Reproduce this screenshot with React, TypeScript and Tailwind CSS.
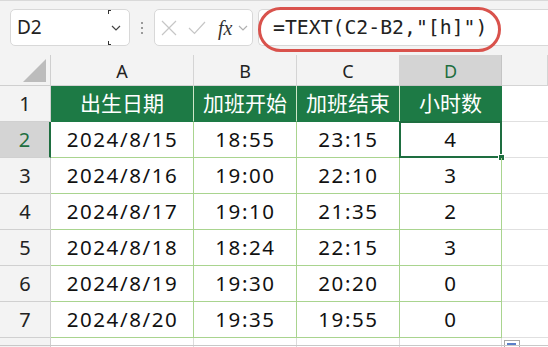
import React from "react";

const font = { fontFamily: '"Noto Sans", "Noto Sans CJK SC", sans-serif' };

const rows = [
  ["2024/8/15", "18:55", "23:15", "4"],
  ["2024/8/16", "19:00", "22:10", "3"],
  ["2024/8/17", "19:10", "21:35", "2"],
  ["2024/8/18", "18:24", "22:15", "3"],
  ["2024/8/19", "19:30", "20:20", "0"],
  ["2024/8/20", "19:35", "19:55", "0"],
];

const heads = ["出生日期", "加班开始", "加班结束", "小时数"];

function Chevron({ color }: { color: string }) {
  return (
    <svg width="10" height="6" viewBox="0 0 10 6">
      <path d="M1 1 L5 5 L9 1" fill="none" stroke={color} strokeWidth="1.2" />
    </svg>
  );
}

export default function App() {
  return (
    <div className="w-[548px] h-[347px] overflow-hidden bg-white relative" style={font}>
      {/* toolbar */}
      <div className="h-[55px] bg-[#f3f3f3] border-t border-[#d9d9d9] flex items-start pt-[8px] pl-[10px]">
        <div className="w-[120px] h-[37px] bg-white border border-[#d8d8d8] rounded-[5px] flex items-center pl-[6px] pr-[8px] relative">
          <span className="text-[19px] text-[#222] leading-none">D2</span>
          <div className="flex-1" />
          <Chevron color="#444" />
          <div className="absolute left-[97px] top-[0px] w-[3px] h-[4px] border-l border-t border-[#333]" />
          <div className="absolute left-[97px] bottom-[0px] w-[3px] h-[4px] border-l border-b border-[#333]" />
        </div>
        <div className="w-[24px] h-[37px] flex flex-col items-center justify-center gap-[3px]">
          <div className="w-[2px] h-[2px] bg-[#9a9a9a]" />
          <div className="w-[2px] h-[2px] bg-[#9a9a9a]" />
          <div className="w-[2px] h-[2px] bg-[#9a9a9a]" />
        </div>
        <div className="w-[99px] h-[37px] bg-white border border-[#d8d8d8] rounded-[5px] flex items-center pl-[6px]">
          <svg width="16" height="16" viewBox="0 0 16 16">
            <path d="M1 1 L15 15 M15 1 L1 15" stroke="#c6c6c6" strokeWidth="1.2" />
          </svg>
          <div className="w-[11px]" />
          <svg width="18" height="14" viewBox="0 0 18 14">
            <path d="M1 7 L6.5 12.5 L17 1" fill="none" stroke="#c6c6c6" strokeWidth="1.2" />
          </svg>
          <div className="w-[12px]" />
          <span
            className="text-[20px] italic text-[#333] leading-none"
            style={{ fontFamily: '"Liberation Serif", serif' }}
          >
            fx
          </span>
          <div className="w-[6px]" />
          <Chevron color="#b0b0b0" />
        </div>
        <div className="ml-[5px] flex-1 h-[37px] bg-white border-y border-l border-[#d8d8d8] rounded-l-[5px] flex items-center pl-[14px]">
          <span
            className="text-[19.8px] text-[#222] leading-none whitespace-pre"
            style={{ fontFamily: '"DejaVu Sans Mono", monospace' }}
          >
            =TEXT(C2-B2,"[h]")
          </span>
        </div>
      </div>

      {/* red highlight */}
      <div className="absolute left-[258px] top-[7px] w-[243px] h-[45px] border-[3px] border-[#d9524c] rounded-full" />

      {/* sheet */}
      <div className="grid grid-cols-[51px_143px_103px_103px_102px_1fr] [grid-template-rows:31px_repeat(7,36px)_36px]">
        {/* header row */}
        <div className="bg-[#f3f3f3] border-r border-b border-[#cfcfcf] flex items-end justify-end pr-[3px] pb-[2px]">
          <svg width="24" height="24" viewBox="0 0 24 24">
            <polygon points="23,0 23,23 0,23" fill="#bcbcbc" />
          </svg>
        </div>
        {["A", "B", "C"].map((c) => (
          <div
            key={c}
            className="bg-[#f3f3f3] border-r border-b border-[#d4d4d4] flex items-center justify-center text-[18px] text-[#222] pt-[3px]"
          >
            {c}
          </div>
        ))}
        <div className="bg-[#d4d4d4] border-r border-b border-[#c4c4c4] flex items-center justify-center text-[18px] text-[#1e6e40] pt-[3px]">
          D
        </div>
        <div className="bg-[#f3f3f3] border-r border-b border-[#d4d4d4]" />

        {/* row 1 */}
        <div className="bg-[#f3f3f3] border-r border-b border-[#d0d0d0] flex items-center justify-center text-[20px] text-[#222]">
          1
        </div>
        {heads.map((h, i) => (
          <div
            key={h}
            className={`bg-[#1d7a45] border-b border-[#1d7a45] flex items-center justify-center text-[21px] text-white ${
              i < 3 ? "border-r border-r-[#cfe6c8]" : "border-r border-r-[#1d7a45]"
            }`}
          >
            {h}
          </div>
        ))}
        <div className="border-b border-[#e0e0e0]" />

        {rows.map((r, ri) => {
          const sel = ri === 0;
          return (
            <React.Fragment key={ri}>
              <div
                className={`${
                  sel ? "bg-[#d4d4d4] text-[#1e6e40] border-r-2 border-r-[#1e6e40]" : "bg-[#f3f3f3] text-[#222] border-r border-r-[#cfcfcf]"
                } border-b border-b-[#d0d0d0] flex items-center justify-center text-[20px]`}
              >
                {ri + 2}
              </div>
              {r.map((v, ci) => (
                <div
                  key={ci}
                  className="relative border-r border-b border-[#a9d48f] flex items-center justify-center text-[20.5px] text-[#111] tracking-[1.6px] pl-[1px]"
                >
                  {v}
                  {sel && ci === 3 && (
                    <>
                      <div className="absolute -left-px -top-px -right-px -bottom-px border-2 border-[#1e6e40]" />
                      <div className="absolute -right-[4px] -bottom-[4px] w-[7px] h-[7px] bg-[#1e6e40] border border-white" />
                    </>
                  )}
                </div>
              ))}
              <div className="border-b border-[#e0e0e0]" />
            </React.Fragment>
          );
        })}

        {/* partial row 8 */}
        <div className="bg-[#f3f3f3] border-r border-[#cfcfcf]" />
        <div className="border-r border-[#dcdcdc]" />
        <div className="border-r border-[#dcdcdc]" />
        <div className="border-r border-[#dcdcdc]" />
        <div className="border-r border-[#dcdcdc]" />
        <div />
      </div>

      {/* paste options icon */}
      <div className="absolute left-[504px] top-[340px] w-[16px] h-[12px] bg-white border border-[#a8a8a8] p-[2px]">
        <div className="w-[9px] h-[3px] bg-[#5b7fc9]" />
      </div>
      <div className="absolute left-0 right-0 top-[345px] h-px bg-[#c8c8c8]" />
    </div>
  );
}
